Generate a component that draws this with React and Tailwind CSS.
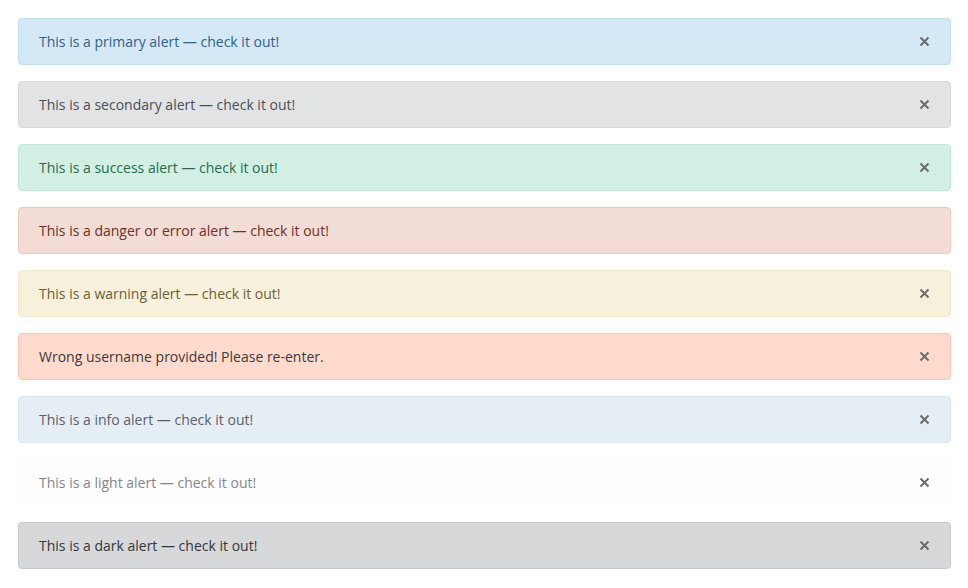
import React from "react";

const alerts = [
  { text: "This is a primary alert — check it out!", cls: "bg-[#d4e9f5] border-[#bfdff0] text-[#2f6189]", close: true },
  { text: "This is a secondary alert — check it out!", cls: "bg-[#e2e3e5] border-[#d6d8db] text-[#4b5054]", close: true },
  { text: "This is a success alert — check it out!", cls: "bg-[#d3efe4] border-[#bfe8d6] text-[#246d4c]", close: true },
  { text: "This is a danger or error alert — check it out!", cls: "bg-[#f2dcd5] border-[#eccac1] text-[#6e2f1e]", close: false },
  { text: "This is a warning alert — check it out!", cls: "bg-[#f6f0dd] border-[#f1e8c9] text-[#6d6031]", close: true },
  { text: "Wrong username provided! Please re-enter.", cls: "bg-[#ffdacd] border-[#fcc6b4] text-[#3a3a3a]", close: true },
  { text: "This is a info alert — check it out!", cls: "bg-[#e6eef5] border-[#d9e5f0] text-[#5a6068]", close: true },
  { text: "This is a light alert — check it out!", cls: "bg-[#fefefe] border-[#fdfdfe] text-[#838587]", close: true },
  { text: "This is a dark alert — check it out!", cls: "bg-[#d6d8d9] border-[#c6c8ca] text-[#33373b]", close: true },
];

export default function App() {
  return (
    <div
      className="w-[968px] h-[588px] bg-white pt-[18px] px-[18px] flex flex-col gap-[16px]"
      style={{ fontFamily: '"Open Sans", "Noto Sans", sans-serif' }}
    >
      {alerts.map((a, i) => (
        <div
          key={i}
          className={`h-[47px] w-[933px] shrink-0 border rounded-[4px] flex items-center justify-between pl-[20px] pr-[20px] text-[14px] ${a.cls}`}
        >
          <span>{a.text}</span>
          {a.close && (
            <svg width="11" height="11" viewBox="0 0 11 11">
              <path d="M1.5 1.5 L9.5 9.5 M9.5 1.5 L1.5 9.5" stroke="#6b6b6b" strokeWidth="2" strokeLinecap="butt" />
            </svg>
          )}
        </div>
      ))}
    </div>
  );
}
